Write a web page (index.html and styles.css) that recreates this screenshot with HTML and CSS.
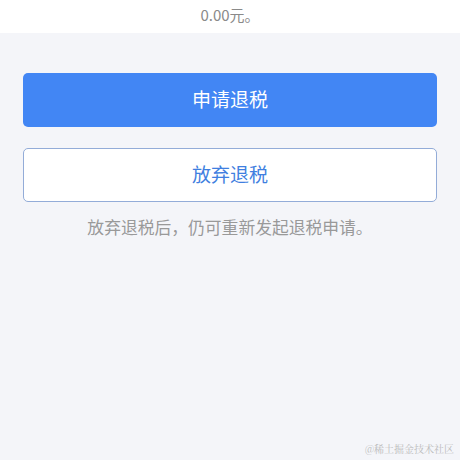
FILE: index.html
```html
<!DOCTYPE html>
<html lang="zh">
<head>
    <meta charset="UTF-8">
    <meta name="viewport" content="width=device-width, initial-scale=1.0">
    <title>退税申请</title>
    <link rel="stylesheet" href="styles.css">
</head>
<body>

<div class="amount-bar">0.00元。</div>

<div class="actions">
    <button class="btn btn-primary">申请退税</button>
    <button class="btn btn-outline">放弃退税</button>
    <p class="tip">放弃退税后，仍可重新发起退税申请。</p>
</div>

<div class="watermark">@稀土掘金技术社区</div>

</body>
</html>
```

FILE: styles.css
```css
html, body {
    height: 100%;
}
body {
    margin: 0;
    background-color: #f4f5f9;
    font-family: "Noto Sans CJK SC", "Noto Sans", sans-serif;
    position: relative;
}
.amount-bar {
    height: 33px;
    background-color: #fff;
    color: #8a8a8a;
    font-size: 15px;
    line-height: 30px;
    text-align: center;
}
.actions {
    display: flex;
    flex-direction: column;
    gap: 21px;
    padding: 40px 23px 0;
}
.btn {
    height: 54px;
    padding: 0 0 3px;
    border-radius: 5px;
    font-family: inherit;
    font-size: 19px;
    cursor: pointer;
}
.btn-primary {
    border: none;
    background-color: #4286f4;
    color: #fff;
}
.btn-outline {
    border: 1px solid #93acd8;
    background-color: #fff;
    color: #3f7fe0;
}
.tip {
    margin: -8px 0 0;
    text-align: center;
    color: #999;
    font-size: 16.8px;
}
.watermark {
    position: absolute;
    right: 6px;
    bottom: 4px;
    font-family: "Noto Serif CJK SC", "Noto Sans CJK SC", serif;
    font-size: 10px;
    color: #bbb;
}
```
